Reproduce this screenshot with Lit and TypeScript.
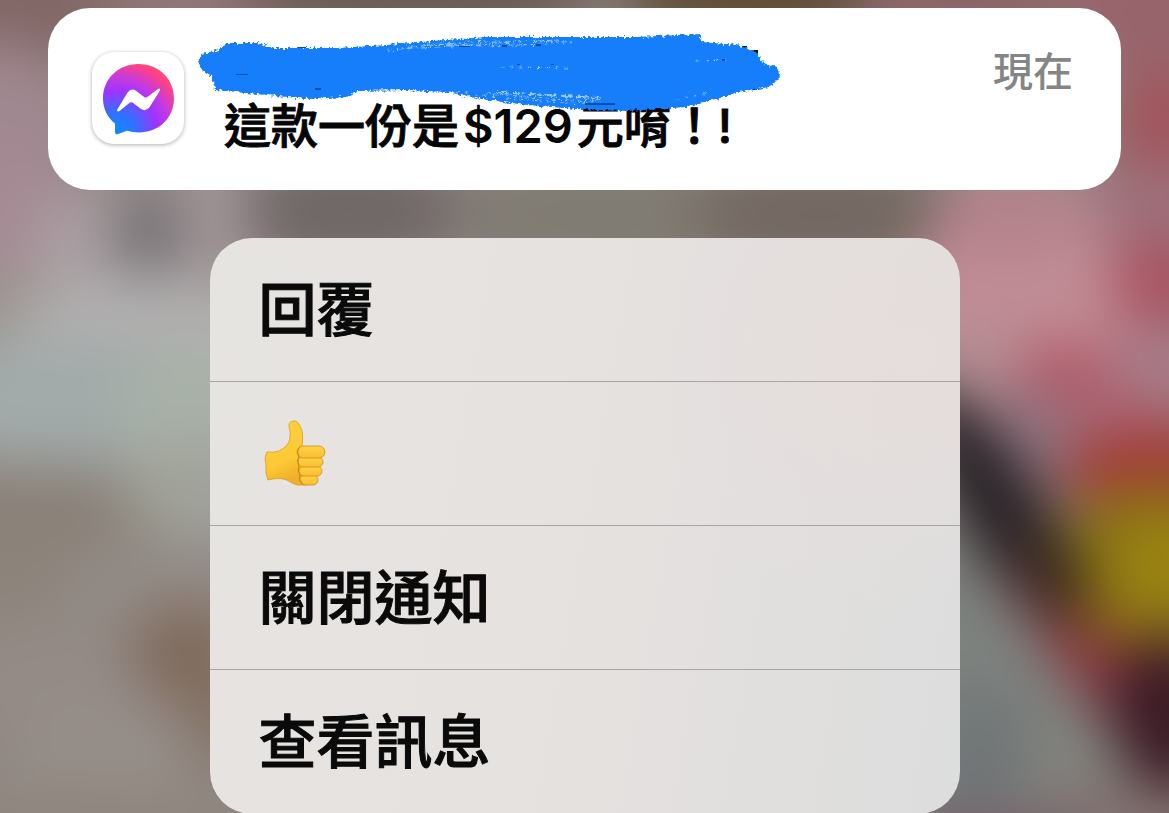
import { LitElement, html, svg, css } from "lit";
import { customElement } from "lit/decorators.js";

// cx, cy, rx, ry, rotation, colour
type Blob = [number, number, number, number, number, string];

const BLOBS: Blob[] = [
  [40, -10, 190, 70, 0, "#816765"],
  [200, -10, 110, 60, 0, "#8f7577"],
  [420, -10, 180, 60, 0, "#6c5c58"],
  [760, -10, 140, 60, 0, "#5f4f38"],
  [960, -10, 110, 60, 0, "#8b6469"],
  [1150, 10, 90, 70, 0, "#98646c"],
  [-10, 130, 90, 90, 0, "#a08890"],
  [10, 220, 80, 70, 0, "#a58a94"],
  [110, 255, 80, 70, 0, "#aaa0a3"],
  [225, 215, 60, 60, 0, "#a3979a"],
  [148, 234, 38, 42, 0, "#757072"],
  [350, 210, 110, 60, 0, "#706767"],
  [600, 215, 150, 60, 0, "#807b73"],
  [820, 215, 130, 60, 0, "#736862"],
  [0, 310, 70, 40, 0, "#9a938e"],
  [150, 330, 140, 54, 0, "#b2b0b0"],
  [60, 400, 190, 62, 0, "#a2abaa"],
  [200, 410, 80, 70, 0, "#a8b1a8"],
  [200, 490, 90, 50, 0, "#a1a39a"],
  [30, 535, 120, 66, 0, "#8a8178"],
  [20, 610, 110, 60, 0, "#8d857c"],
  [150, 580, 90, 46, 0, "#928b86"],
  [60, 680, 110, 60, 0, "#948b87"],
  [190, 655, 60, 50, 20, "#806a5c"],
  [218, 705, 30, 60, -10, "#826e5f"],
  [100, 760, 90, 60, 0, "#968e89"],
  [60, 840, 260, 60, 0, "#8f877e"],
  [1040, 290, 130, 110, 0, "#c18c95"],
  [1010, 210, 70, 50, 0, "#b4838b"],
  [1165, 130, 60, 60, 0, "#a2545c"],
  [1155, 215, 60, 56, 0, "#9d707b"],
  [1164, 285, 52, 46, 0, "#a95260"],
  [990, 370, 60, 50, 0, "#b58d93"],
  [1160, 375, 60, 54, 0, "#a67d89"],
  [1068, 383, 54, 42, 10, "#b15a69"],
  [1035, 440, 64, 46, 20, "#8f7682"],
  [1130, 425, 64, 36, 0, "#a96b78"],
  [1160, 470, 100, 46, 0, "#a23c3a"],
  [1000, 760, 110, 220, -10, "#7d827f"],
  [1008, 520, 160, 42, 57, "#272226"],
  [1110, 660, 150, 44, 52, "#87383f"],
  [1155, 562, 98, 80, 0, "#8a7314"],
  [1175, 565, 60, 44, 0, "#9c8512"],
  [1052, 570, 28, 54, -22, "#33251f"],
  [1060, 800, 60, 120, -35, "#82847e"],
  [1180, 690, 60, 56, 20, "#552e2c"],
  [1168, 722, 54, 76, -15, "#3b1b25"],
  [980, 750, 50, 60, 0, "#707577"],
  [1130, 815, 100, 30, 0, "#82716f"],
  [980, 840, 120, 30, 0, "#74606a"],
];

@customElement("blurred-wallpaper")
export class BlurredWallpaper extends LitElement {
  static styles = css`
    :host { display: block; overflow: hidden; }
    .canvas { display: block; width: 100%; height: 100%; }
  `;
  render() {
    return html`<svg class="canvas" viewBox="0 0 1169 813" preserveAspectRatio="none" aria-hidden="true">
      <defs>
        <filter id="soft" filterUnits="userSpaceOnUse" x="-200" y="-200" width="1569" height="1213"
          color-interpolation-filters="sRGB">
          <feGaussianBlur stdDeviation="27" />
        </filter>
      </defs>
      <g filter="url(#soft)">
        <rect x="-200" y="-200" width="1569" height="1213" fill="#8f8683" />
        ${BLOBS.map(([cx, cy, rx, ry, a, fill]) => svg`
          <ellipse cx=${cx} cy=${cy} rx=${rx} ry=${ry} fill=${fill} transform="rotate(${a} ${cx} ${cy})" />`)}
      </g>
    </svg>`;
  }
}

@customElement("notification-card")
export class NotificationCard extends LitElement {
  static styles = css`
    :host { display: block; }
    .card {
      display: flex;
      align-items: flex-start;
      padding: 44px 48px 34px 44px;
      border-radius: 42px;
      background: #fff;
    }
    .app {
      flex: none;
      width: 92px;
      height: 92px;
      border-radius: 22px;
      background: #fff;
      box-shadow: 0 1px 4px rgba(0, 0, 0, 0.32);
    }
    .app svg { display: block; width: 92px; height: 92px; }
    .body { flex: 1; min-width: 0; padding-left: 40px; }
    .sender { position: relative; height: 44px; }
    .ink {
      position: absolute;
      left: -27px;
      top: -18px;
      z-index: 1;
      width: 592px;
      height: 90px;
    }
    .message {
      margin: 0;
      font-size: 47px;
      line-height: 60px;
      font-weight: 500;
      -webkit-text-stroke: 1px #060606;
      color: #060606;
    }
    .amount {
      margin: 0 4px;
      font-weight: 600;
      -webkit-text-stroke: 0;
    }
    .time {
      flex: none;
      font-size: 40px;
      line-height: 40px;
      font-weight: 500;
      color: #858585;
    }
  `;
  render() {
    return html`<article class="card">
      <div class="app">
        <svg viewBox="0 0 92 92" role="img" aria-label="Messenger">
          <defs>
            <radialGradient id="bubble" gradientUnits="userSpaceOnUse" cx="23" cy="82" r="80">
              <stop offset="0" stop-color="#0a8dff" />
              <stop offset="0.26" stop-color="#2f72ff" />
              <stop offset="0.54" stop-color="#a033ff" />
              <stop offset="0.7" stop-color="#c43ae0" />
              <stop offset="0.9" stop-color="#ff4186" />
              <stop offset="1" stop-color="#ff5070" />
            </radialGradient>
          </defs>
          <path fill="url(#bubble)" d="M46.500 12C26 12 11 27 11 46.500C11 57 15.500 65.500 23 71.500V80Q23 83 26 82L35 78.800Q41 80.500 46.500 80.500C67 80.500 82 66 82 46.500C82 27 67 12 46.500 12Z" />
          <path fill="#fff" d="M25.300 57.500L35.700 40.200Q39.200 35.600 44 38.800L52.500 45.200Q53.700 46 55 45.200L66 36.900Q68.700 35.600 68 38.500L57.500 55.200Q53.700 60 49 57L40.500 50.600Q39.200 49.800 38 50.600L27.500 59Q24.300 60.300 25.300 57.500Z" />
        </svg>
      </div>
      <div class="body">
        <div class="sender">
          <svg class="ink" viewBox="0 0 592 90" aria-hidden="true">
            <defs>
              <filter id="rough" x="-5%" y="-20%" width="110%" height="140%">
                <feTurbulence type="fractalNoise" baseFrequency="0.35" numOctaves="2" seed="4" />
                <feDisplacementMap in="SourceGraphic" scale="6" xChannelSelector="R" yChannelSelector="G" />
              </filter>
            </defs>
            <g fill="#111">
              <rect x="556" y="16" width="5" height="5" />
              <rect x="545" y="12" width="5" height="3" />
              <rect x="540" y="53" width="5" height="3" />
              <rect x="556" y="53" width="4" height="3" />
            </g>
            <g filter="url(#rough)">
              <path fill="#157efb" d="M5 20L22 16L29 9L60 9L78 14L140 14L190 11L235 7L290 3L345 3L400 3L440 3L502 0L505 8L540 11L558 17L567 30L580 33L583 43L573 53L545 57L515 66L490 73L430 77L380 75L330 71L290 66L250 58L210 56L160 57L150 63L110 65L60 60L18 56L15 42L5 36L1 27Z" />
              <g fill="none" stroke="#fff" stroke-linecap="round" opacity="0.600">
                <path stroke-width="1" stroke-dasharray="2 4 5 3" d="M205 14L245 10L290 7L375 8M230 10L290 12L350 10M190 16L240 13L300 9L360 6" />
                <path stroke-width="2" stroke-dasharray="6 3 2 5" d="M300 58L350 61L402 64" />
                <path stroke-width="1" stroke-dasharray="4 3 2 4" d="M290 59L350 65L402 67M310 64L365 69L400 70" />
                <path stroke-width="1" stroke-dasharray="2 7" d="M260 58L302 63M480 66L515 58M305 33L375 34M500 27L530 26" />
              </g>
            </g>
            <g fill="#0b4ea8">
              <rect x="39" y="40" width="12" height="1" />
              <rect x="118" y="54" width="6" height="2" />
              <rect x="101" y="13" width="8" height="1" />
              <rect x="262" y="12" width="11" height="1" />
              <rect x="305" y="11" width="5" height="2" />
              <rect x="339" y="10" width="5" height="2" />
              <rect x="525" y="25" width="3" height="2" />
              <rect x="320" y="30" width="3" height="1" />
              <rect x="354" y="30" width="3" height="1" />
              <rect x="388" y="69" width="30" height="2" />
            </g>
          </svg>
        </div>
        <p class="message">這款一份是<span class="amount">$129</span>元唷！!</p>
      </div>
      <time class="time">現在</time>
    </article>`;
  }
}

const thumb = html`<svg class="thumb" viewBox="0 0 64 70" aria-hidden="true">
  <defs>
    <linearGradient id="skin" x1="0" y1="0" x2="0.300" y2="1">
      <stop offset="0" stop-color="#ffd23e" />
      <stop offset="0.700" stop-color="#fdc935" />
      <stop offset="1" stop-color="#efaf2a" />
    </linearGradient>
    <linearGradient id="finger" x1="0" y1="0" x2="0" y2="1">
      <stop offset="0" stop-color="#ffd548" />
      <stop offset="1" stop-color="#f8bd30" />
    </linearGradient>
  </defs>
  <path fill="url(#skin)" stroke="#dc9a24" stroke-width="0.800" d="M4 33Q10 34 16 32Q26 27 27 19Q28 14 26 8Q25 3 30 2Q34 1 37 7Q41 13 39 27L44 32V66H34Q28 64 24 61Q16 58 5 61Q2 55 3 46Q1 38 4 33Z" />
  <g fill="url(#finger)" stroke="#d08d1c" stroke-width="0.800">
    <rect x="37" y="56" width="18" height="10" rx="5" />
    <rect x="36" y="47" width="23" height="10" rx="5" />
    <rect x="35" y="38" width="25" height="10" rx="5" />
    <rect x="34" y="27" width="28" height="12" rx="6" />
  </g>
  <path fill="none" stroke="#c98316" stroke-width="1" stroke-linecap="round" d="M37 28Q33 32 36 37Q33 42 36 47Q34 52 37 56Q35 61 40 65" />
</svg>`;

@customElement("action-menu")
export class ActionMenu extends LitElement {
  static styles = css`
    :host { display: block; }
    .menu {
      display: flex;
      flex-direction: column;
      overflow: hidden;
      border-radius: 42px;
      background:
        radial-gradient(circle at 94% 20%, rgba(232, 221, 220, 0.8), transparent 32%),
        linear-gradient(100deg, #e6e4e1 0%, #e6e2e0 45%, #e1dfde 75%, #dcdddd 100%);
    }
    .item {
      display: flex;
      align-items: center;
      box-sizing: border-box;
      min-height: 144px;
      margin: 0;
      padding: 0 49px;
      border: 0;
      border-bottom: 1px solid #aaa6a5;
      background: none;
      font: inherit;
      font-size: 58px;
      line-height: 80px;
      font-weight: 500;
      -webkit-text-stroke: 1px #0a0a0a;
      color: #0a0a0a;
      text-align: left;
      cursor: pointer;
    }
    .item:last-child { border-bottom: 0; }
    .thumb { display: block; width: 64px; height: 70px; margin-left: 4px; }
  `;
  render() {
    return html`<nav class="menu" aria-label="通知">
      <button class="item" type="button">回覆</button>
      <button class="item" type="button" aria-label="👍">${thumb}</button>
      <button class="item" type="button">關閉通知</button>
      <button class="item" type="button">查看訊息</button>
    </nav>`;
  }
}

@customElement("app-root")
export class AppRoot extends LitElement {
  static styles = css`
    :host {
      display: block;
      position: relative;
      box-sizing: border-box;
      min-height: 100vh;
      overflow: hidden;
      font-family: Inter, "Noto Sans CJK TC", sans-serif;
    }
    .wallpaper { position: absolute; inset: 0; }
    .stack {
      position: relative;
      display: flex;
      flex-direction: column;
      gap: 48px;
      padding: 8px 48px 0;
    }
    .menu { width: 100%; max-width: 750px; align-self: center; }
  `;
  render() {
    return html`
      <blurred-wallpaper class="wallpaper"></blurred-wallpaper>
      <main class="stack">
        <notification-card></notification-card>
        <action-menu class="menu"></action-menu>
      </main>`;
  }
}
